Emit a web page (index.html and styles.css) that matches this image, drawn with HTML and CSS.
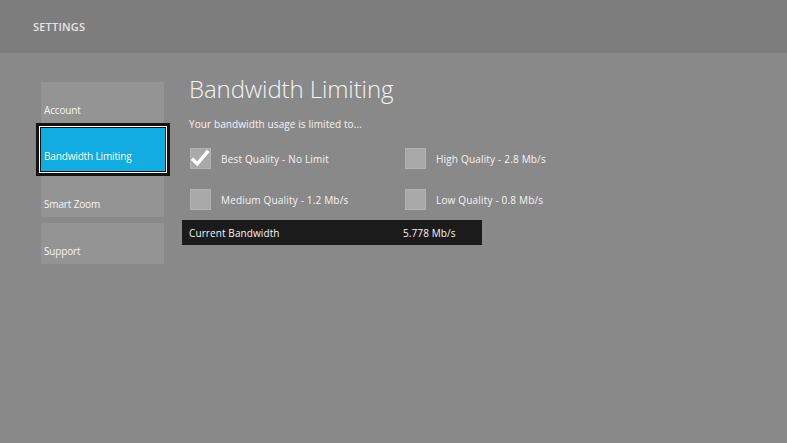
FILE: index.html
```html
<!DOCTYPE html>
<html>
<head>
<meta charset="utf-8">
<link rel="stylesheet" href="styles.css">
</head>
<body>
<header class="topbar"><span class="topbar-title">SETTINGS</span></header>
<main class="main">
  <nav class="sidebar">
    <div class="tile">Account</div>
    <div class="tile tile-active">Bandwidth Limiting</div>
    <div class="tile">Smart Zoom</div>
    <div class="tile">Support</div>
  </nav>
  <section class="content">
    <h1 class="title">Bandwidth Limiting</h1>
    <p class="subtitle">Your bandwidth usage is limited to...</p>
    <div class="options">
      <div class="option">
        <span class="check check-on"><svg viewBox="0 0 21 21" width="21" height="21"><path d="M2 10.8 L7.3 15.8 L18.3 2.8" fill="none" stroke="#ffffff" stroke-width="3.5" stroke-linecap="butt" stroke-linejoin="miter"/></svg></span>
        <span class="option-label">Best Quality - No Limit</span>
      </div>
      <div class="option">
        <span class="check"></span>
        <span class="option-label">High Quality - 2.8 Mb/s</span>
      </div>
      <div class="option">
        <span class="check"></span>
        <span class="option-label">Medium Quality - 1.2 Mb/s</span>
      </div>
      <div class="option">
        <span class="check"></span>
        <span class="option-label">Low Quality - 0.8 Mb/s</span>
      </div>
    </div>
    <div class="current">
      <span class="current-label">Current Bandwidth</span>
      <span class="current-value">5.778 Mb/s</span>
    </div>
  </section>
</main>
</body>
</html>
```
FILE: styles.css
```css
html, body {
  margin: 0;
  padding: 0;
}
body {
  width: 787px;
  height: 443px;
  background: #898989;
  font-family: "Open Sans", "Noto Sans", sans-serif;
  color: #ffffff;
  overflow: hidden;
}
.topbar {
  height: 53px;
  background: #7d7d7d;
  display: flex;
  align-items: center;
  padding-left: 33px;
  box-sizing: border-box;
}
.topbar-title {
  font-size: 11px;
  font-weight: 600;
  color: #e6e6e6;
  letter-spacing: 0.2px;
}
.main {
  display: flex;
  align-items: flex-start;
  padding-top: 22px;
}
.sidebar {
  margin-left: 41px;
  margin-top: 7px;
  width: 123px;
  display: flex;
  flex-direction: column;
  gap: 6px;
}
.tile {
  height: 41px;
  background: #949494;
  box-sizing: border-box;
  display: flex;
  align-items: flex-end;
  padding: 0 0 6px 3px;
  font-size: 10px;
  letter-spacing: -0.15px;
  color: #f4f4f4;
}
.tile-active {
  background: #12ace1;
  width: 124px;
  height: 43px;
  margin-top: -1px;
  margin-bottom: -1px;
  padding-bottom: 8px;
  box-shadow: 0 0 0 1px #121212, 0 0 0 2px #ffffff, 0 0 0 5px #121212;
  color: #ffffff;
}
.content {
  margin-left: 25px;
}
.title {
  margin: 0;
  font-size: 24px;
  line-height: 28px;
  font-weight: 300;
  color: #f4f4f4;
  letter-spacing: -0.1px;
}
.subtitle {
  margin: 14px 0 0;
  font-size: 10px;
  line-height: 14px;
  color: #f4f4f4;
  letter-spacing: 0.1px;
}
.options {
  display: grid;
  grid-template-columns: 215px 160px;
  row-gap: 20px;
  margin-top: 17px;
  margin-left: 1px;
}
.option {
  display: flex;
  align-items: center;
  gap: 10px;
  height: 21px;
}
.check {
  width: 21px;
  height: 21px;
  box-sizing: border-box;
  background: #a9a9a9;
  border: 1px solid #b3b3b3;
  display: block;
  position: relative;
}
.check svg {
  position: absolute;
  left: -1px;
  top: -1px;
}
.option-label {
  font-size: 10px;
  color: #f4f4f4;
  letter-spacing: 0.18px;
}
.current {
  margin: 10px 0 0 -7px;
  width: 300px;
  height: 25px;
  background: #1b1b1b;
  display: grid;
  grid-template-columns: 221px 1fr;
  align-items: center;
  font-size: 10px;
  color: #f4f4f4;
  letter-spacing: 0.1px;
}
.current-label {
  padding-left: 7px;
}
```
